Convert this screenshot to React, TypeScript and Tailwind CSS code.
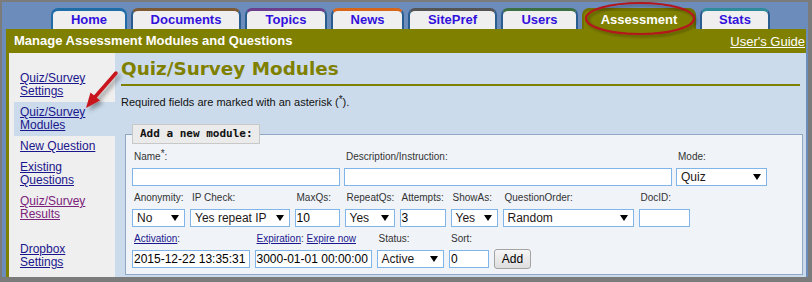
import React from "react";

const tabs = [
  { label: "Home", cls: "w-[76px] border-t-[#1f6ca6] border-x-[#1f6ca6]" },
  { label: "Documents", cls: "w-[110px] border-t-[#7d5a36] border-x-[#2a5d8f]" },
  { label: "Topics", cls: "w-[82px] border-t-[#6b3f8c] border-x-[#2a5d8f]" },
  { label: "News", cls: "w-[73px] border-t-[#d8661a] border-x-[#2a5d8f]" },
  { label: "SitePref", cls: "w-[89px] border-t-[#555555] border-x-[#2a5d8f]" },
  { label: "Users", cls: "w-[77px] border-t-[#3d6f45] border-x-[#2a5d8f]" },
];

function Tri() {
  return (
    <svg width="8" height="6" viewBox="0 0 8 6" className="shrink-0">
      <polygon points="0,0 8,0 4,6" fill="#000" />
    </svg>
  );
}

function Star() {
  return <span className="relative top-[-3px] text-[10px] leading-[0]">*</span>;
}

function Label({ children }: { children?: React.ReactNode }) {
  return (
    <div className="h-[13px] whitespace-nowrap pl-[2px] text-[10px] leading-[13px] text-[#333]">
      {children}
    </div>
  );
}

function TextBox({ value }: { value?: string }) {
  return (
    <div className="mt-[5px] h-[18px] overflow-hidden whitespace-nowrap border border-[#80b5ea] bg-white pl-[1px] text-[12px] leading-[16px] text-black">
      {value}
    </div>
  );
}

function Select({ value }: { value: string }) {
  return (
    <div className="mt-[5px] flex h-[18px] items-center justify-between whitespace-nowrap border border-[#80b5ea] bg-white pl-[4px] pr-[5px] text-[12px] leading-[16px] text-[#221818]">
      <span>{value}</span>
      <Tri />
    </div>
  );
}

function Field({
  w,
  label,
  children,
}: {
  w: string;
  label?: React.ReactNode;
  children: React.ReactNode;
}) {
  return (
    <div className={`flex shrink-0 flex-col ${w}`}>
      <Label>{label}</Label>
      {children}
    </div>
  );
}

const linkCls = "underline text-[#1a168c]";

export default function App() {
  return (
    <div className="relative h-[282px] w-[812px] overflow-hidden bg-[#7b7b7b] pb-[5px] pl-[2px] pr-[4px] pt-[2px] font-['Liberation_Sans',Arial,sans-serif]">
      <div className="flex h-full flex-col bg-[#6c8dbc] pl-[4px] pr-[2px]">
        {/* Tabs */}
        <div className="flex h-[27px] items-end gap-[4px] pl-[45px]">
          {tabs.map((t) => (
            <div
              key={t.label}
              className={`flex h-[21px] items-center justify-center rounded-t-[7px] border-x-[2px] border-t-[3px] bg-[#efefef] text-[13px] font-bold text-[#3311dd] ${t.cls}`}
            >
              {t.label}
            </div>
          ))}
          <div className="flex h-[21px] w-[114px] items-center justify-center rounded-t-[7px] border-x-[2px] border-t-[3px] border-[#707000] bg-[#808000] text-[13px] font-bold text-white">
            Assessment
          </div>
          <div className="flex h-[21px] w-[70px] items-center justify-center rounded-t-[7px] border-x-[2px] border-t-[3px] border-x-[#2a5d8f] border-t-[#2f8a9a] bg-[#efefef] text-[13px] font-bold text-[#3311dd]">
            Stats
          </div>
        </div>

        {/* Header */}
        <div className="flex h-[24px] items-center justify-between bg-[#808000] pl-[8px] pr-[1px] text-white">
          <span className="text-[13px] font-bold">
            Manage Assessment Modules and Questions
          </span>
          <span className="pt-[2px] text-[13px] underline">User's Guide</span>
        </div>

        {/* Body */}
        <div className="flex flex-1 border-l-[3px] border-[#808000]">
          {/* Sidebar */}
          <div className="w-[106px] shrink-0 bg-[#efefef] pt-[15px] text-[12px] leading-[13px]">
            <div className="py-[4px] pl-[11px]">
              <span className={linkCls}>Quiz/Survey</span>
              <br />
              <span className={linkCls}>Settings</span>
            </div>
            <div className="ml-[5px] bg-[#cbdbeb] py-[4px] pl-[6px]">
              <span className={linkCls}>Quiz/Survey</span>
              <br />
              <span className={linkCls}>Modules</span>
            </div>
            <div className="py-[4px] pl-[11px]">
              <span className={linkCls}>New Question</span>
            </div>
            <div className="py-[4px] pl-[11px]">
              <span className={linkCls}>Existing</span>
              <br />
              <span className={linkCls}>Questions</span>
            </div>
            <div className="py-[4px] pl-[11px]">
              <span className="text-[#7b237b] underline">Quiz/Survey</span>
              <br />
              <span className="text-[#7b237b] underline">Results</span>
            </div>
            <div className="mt-[14px] py-[4px] pl-[11px]">
              <span className={linkCls}>Dropbox</span>
              <br />
              <span className={linkCls}>Settings</span>
            </div>
          </div>

          {/* Content */}
          <div className="flex-1 bg-[#cbdbeb] pl-[6px] pr-[3px]">
            <h1 className="mr-[3px] mt-[5px] border-b-2 border-[#808000] pb-[4px] font-['DejaVu_Sans',Verdana,sans-serif] text-[18.4px] font-bold leading-[22px] text-[#808000]">
              Quiz/Survey Modules
            </h1>
            <p className="mt-[9.5px] text-[11px] leading-[13px] text-[#111]">
              Required fields are marked with an asterisk (<Star />).
            </p>
            <fieldset className="ml-[4px] mt-[15.5px] border border-[#8ea8c6] bg-[#f0f4f9] px-[6px] pb-[6px] pt-[6px]">
              <legend className="h-[20px] border border-[#c8c8c8] bg-[#ebebeb] pl-[7px] pr-[6px] font-['DejaVu_Sans_Mono',monospace] text-[11px] font-bold leading-[18px] text-[#111]">
                Add a new module:
              </legend>
              <div className="flex flex-col gap-[5px]">
                {/* Row 1 */}
                <div className="flex gap-[4px]">
                  <Field
                    w="w-[208px]"
                    label={
                      <>
                        Name<Star />:
                      </>
                    }
                  >
                    <TextBox />
                  </Field>
                  <Field w="w-[328px]" label="Description/Instruction:">
                    <TextBox />
                  </Field>
                  <Field w="w-[91px]" label="Mode:">
                    <Select value="Quiz" />
                  </Field>
                </div>
                {/* Row 2 */}
                <div className="flex gap-[5px]">
                  <Field w="w-[53px]" label="Anonymity:">
                    <Select value="No" />
                  </Field>
                  <Field w="w-[99.5px]" label="IP Check:">
                    <Select value="Yes repeat IP" />
                  </Field>
                  <Field w="w-[45px]" label="MaxQs:">
                    <TextBox value="10" />
                  </Field>
                  <Field w="w-[50px]" label="RepeatQs:">
                    <Select value="Yes" />
                  </Field>
                  <Field w="w-[46px]" label="Attempts:">
                    <TextBox value="3" />
                  </Field>
                  <Field w="w-[47px]" label="ShowAs:">
                    <Select value="Yes" />
                  </Field>
                  <Field w="w-[131px]" label="QuestionOrder:">
                    <Select value="Random" />
                  </Field>
                  <Field w="w-[51px]" label="DocID:">
                    <TextBox />
                  </Field>
                </div>
                {/* Row 3 */}
                <div className="flex items-end gap-[5px]">
                  <Field
                    w="w-[117.5px]"
                    label={
                      <>
                        <span className={linkCls}>Activation</span>:
                      </>
                    }
                  >
                    <TextBox value="2015-12-22 13:35:31" />
                  </Field>
                  <Field
                    w="w-[117px]"
                    label={
                      <>
                        <span className={linkCls}>Expiration</span>:{" "}
                        <span className={linkCls}>Expire now</span>
                      </>
                    }
                  >
                    <TextBox value="3000-01-01 00:00:00" />
                  </Field>
                  <Field w="w-[67.5px]" label="Status:">
                    <Select value="Active" />
                  </Field>
                  <Field w="w-[40px]" label="Sort:">
                    <TextBox value="0" />
                  </Field>
                  <div className="mb-[-1px] flex h-[20px] w-[37px] items-center justify-center rounded-[3px] border border-[#a3a3a3] bg-gradient-to-b from-[#f6f6f6] to-[#dedede] text-[12px] text-black">
                    Add
                  </div>
                </div>
              </div>
            </fieldset>
          </div>
        </div>
      </div>

      {/* Annotations */}
      <svg
        className="pointer-events-none absolute left-[578px] top-0"
        width="124"
        height="42"
        viewBox="0 0 124 42"
      >
        <defs>
          <filter id="sh1" x="-20%" y="-40%" width="140%" height="180%">
            <feDropShadow dx="2" dy="2" stdDeviation="1.5" floodColor="#000" floodOpacity="0.35" />
          </filter>
        </defs>
        <ellipse cx="62" cy="18.5" rx="54" ry="15.5" fill="none" stroke="#b3141c" strokeWidth="2.2" filter="url(#sh1)" />
      </svg>
      <svg
        className="pointer-events-none absolute left-[75px] top-[64px]"
        width="60"
        height="56"
        viewBox="0 0 60 56"
      >
        <defs>
          <filter id="sh2" x="-40%" y="-40%" width="180%" height="180%">
            <feDropShadow dx="3" dy="3" stdDeviation="2" floodColor="#000" floodOpacity="0.35" />
          </filter>
        </defs>
        <g filter="url(#sh2)">
          <line x1="41" y1="9" x2="20" y2="33" stroke="#c8141c" strokeWidth="3.5" strokeLinecap="round" />
          <polygon points="11,44 15.5,28.5 25,36.5" fill="#c8141c" />
        </g>
      </svg>
    </div>
  );
}
